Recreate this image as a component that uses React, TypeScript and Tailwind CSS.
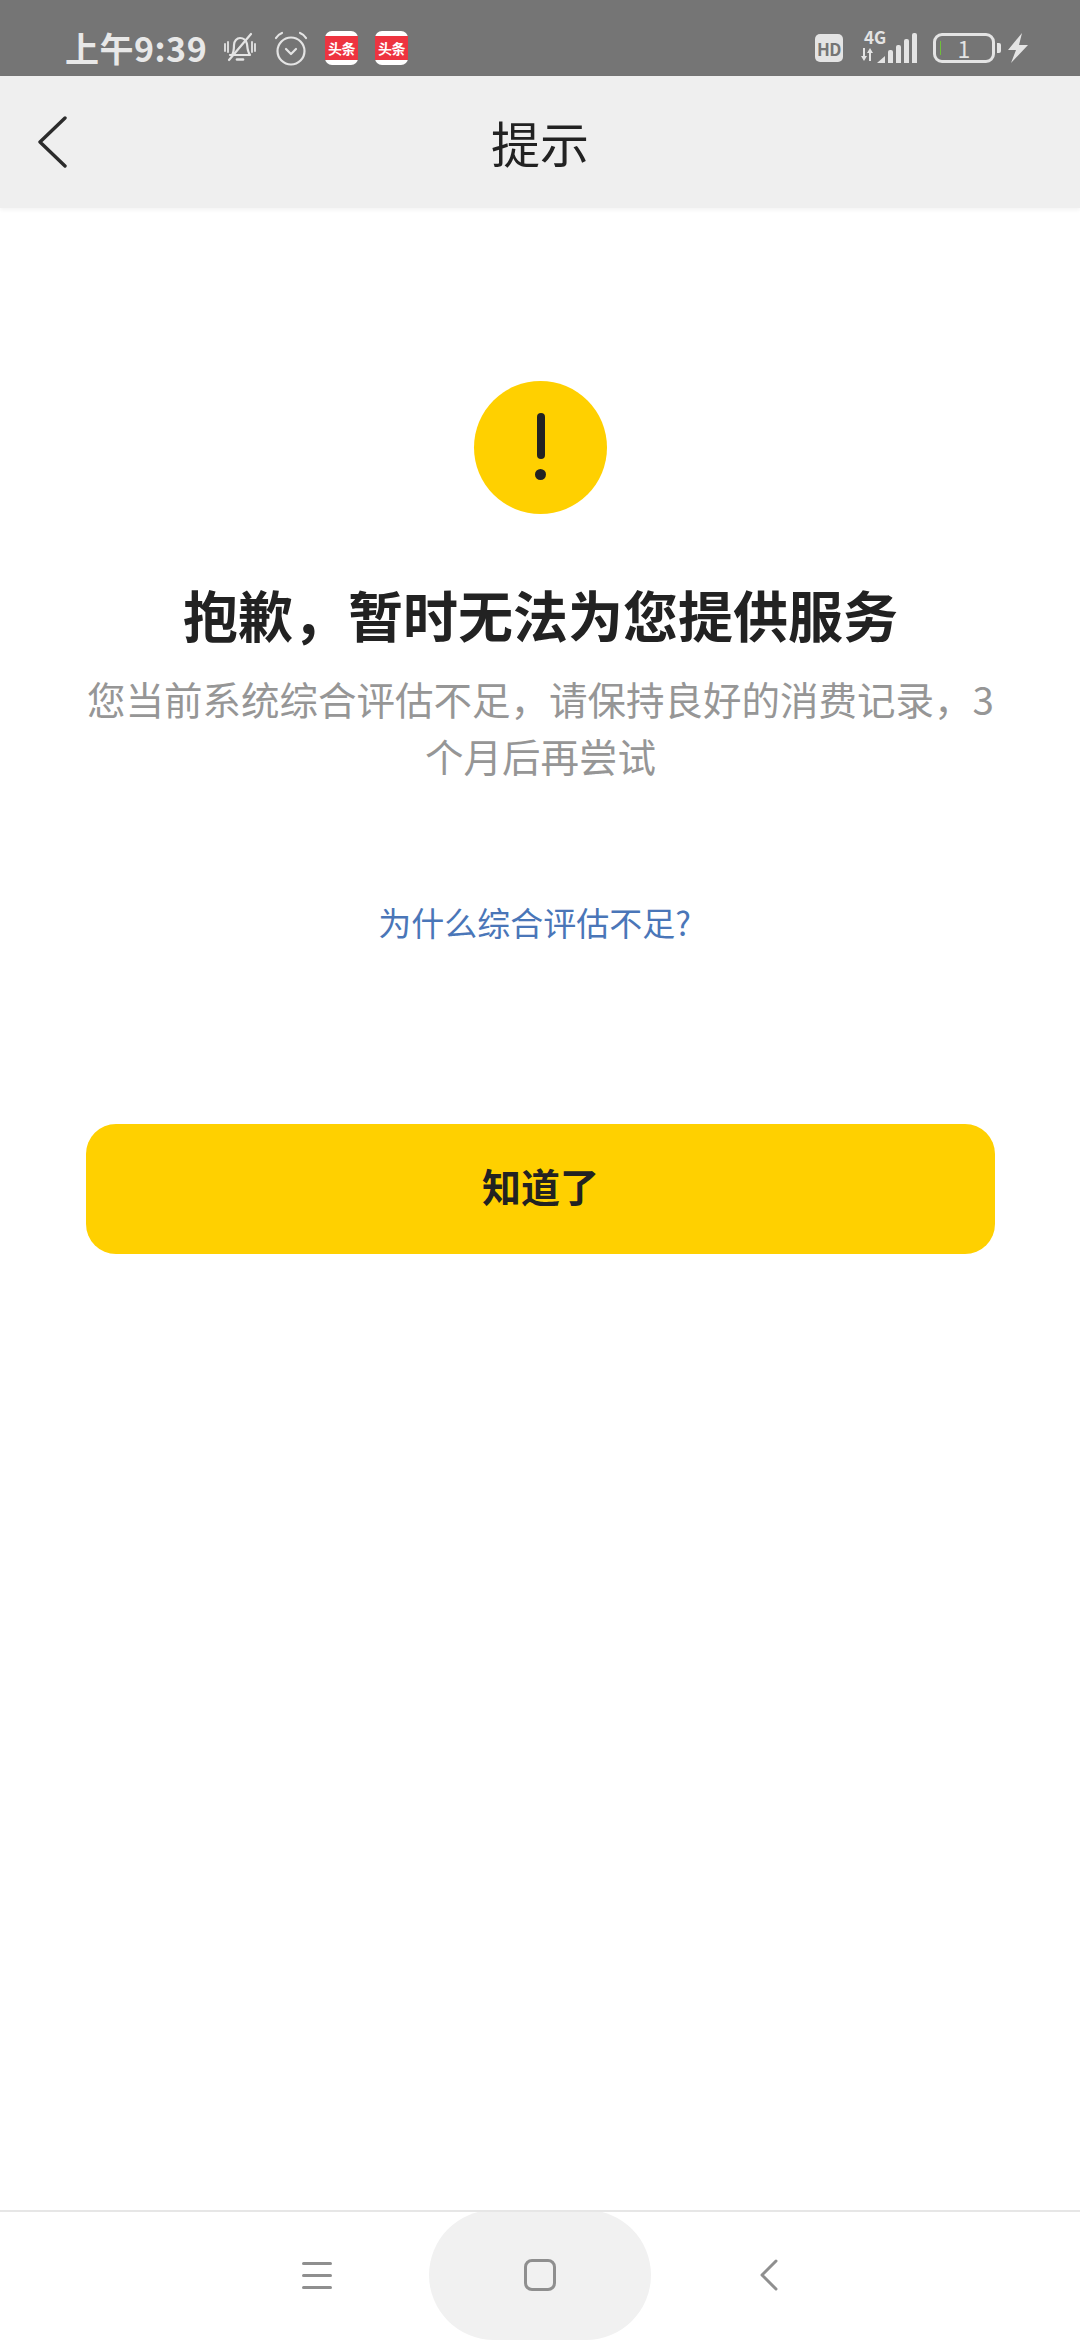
const font = { fontFamily: '"Noto Sans CJK SC", sans-serif' }

function BellOff() {
  return (
    <svg width="36" height="34" viewBox="0 0 36 34" fill="none" stroke="#e4e4e4" strokeWidth="2.2" strokeLinecap="round" strokeLinejoin="round">
      <path d="M10 24c2-3 2-6 2-10 0-4 3-7 6-7s6 2 7 6c.4 4 .6 8 3 11H8" />
      <path d="M15 28.5h6" strokeWidth="2.6" />
      <path d="M29 3 7 29" />
      <path d="M3 13v7M6 11v10M33 13v7M30 11v10" strokeWidth="1.8" />
    </svg>
  )
}

function Alarm() {
  return (
    <svg width="34" height="35" viewBox="0 0 34 35" fill="none" stroke="#e4e4e4" strokeWidth="2.2" strokeLinecap="round" strokeLinejoin="round">
      <circle cx="17" cy="20" r="13.5" />
      <path d="m12 18 5 5 5-5" />
      <path d="M2 7c1.5-2.500 3.500-4 6-5M32 7c-1.500-2.500-3.500-4-6-5" />
    </svg>
  )
}

function Toutiao() {
  return (
    <div className="flex h-[34px] w-[33px] items-center rounded-[7px] bg-white">
      <div className="flex h-[24px] w-full items-center justify-center whitespace-nowrap bg-[#ee3440] text-[14px] font-bold leading-none tracking-[-0.5px] text-white">
        头条
      </div>
    </div>
  )
}

function Signal() {
  return (
    <div className="flex h-[30px] items-end gap-[3px]">
      <svg width="8" height="7" viewBox="0 0 8 7" fill="#e4e4e4"><path d="M0 7 8 0v7z" /></svg>
      <div className="h-[13px] w-[5px] rounded-t-[2px] bg-[#e4e4e4]" />
      <div className="h-[18px] w-[5px] rounded-t-[2px] bg-[#e4e4e4]" />
      <div className="h-[24px] w-[5px] rounded-t-[2px] bg-[#e4e4e4]" />
      <div className="h-[30px] w-[5px] rounded-t-[2px] bg-[#e4e4e4]" />
    </div>
  )
}

function StatusBar() {
  return (
    <div className="flex h-[76px] items-start justify-between bg-[#757575] pl-[65px] pr-[52px] pt-[30px]">
      <div className="flex items-center">
        <span className="w-[141px] whitespace-nowrap text-[34px] font-bold leading-[36px] tracking-[0.5px] text-[#e8e8e8]">上午9:39</span>
        <div className="ml-[16px]"><BellOff /></div>
        <div className="ml-[16px]"><Alarm /></div>
        <div className="ml-[17px]"><Toutiao /></div>
        <div className="ml-[17px]"><Toutiao /></div>
      </div>
      <div className="flex items-start">
        <div className="mt-[4px] flex h-[28px] w-[28px] items-center justify-center rounded-[5px] bg-[#e4e4e4] text-[17px] font-bold leading-none tracking-[-0.5px] text-[#757575]">
          HD
        </div>
        <div className="ml-[15px] flex h-[32px] w-[18px] flex-col items-center">
          <span className="ml-[16px] whitespace-nowrap text-[17px] font-bold leading-[14px] text-[#e4e4e4]">4G</span>
          <svg className="mt-[4px]" width="14" height="13" viewBox="0 0 14 13" fill="#e4e4e4">
            <path d="M3 0h2v8h2l-3 5-3-5h2zM9 13h2V5h2L10 0 7 5h2z" />
          </svg>
        </div>
        <div className="ml-[1px] mt-[3px]"><Signal /></div>
        <div className="ml-[16px] mt-[3px] flex items-center">
          <div className="relative flex h-[30px] w-[62px] items-center justify-center rounded-[9px] border-[3px] border-[#e4e4e4] text-[23px] leading-none text-[#e4e4e4]">
            <div className="absolute left-[4px] top-[5px] h-[14px] w-[1px] bg-[#6fbf3a]" />
            1
          </div>
          <div className="ml-[2px] h-[10px] w-[4px] rounded-r-[2px] bg-[#e4e4e4]" />
          <svg className="ml-[7px]" width="20" height="30" viewBox="0 0 20 30" fill="#e4e4e4">
            <path d="M14 0 0 17h8L3 30l17-18h-9z" />
          </svg>
        </div>
      </div>
    </div>
  )
}

function NavBar() {
  return (
    <div className="relative flex h-[132px] items-center justify-center bg-[#efefef] shadow-[0_2px_4px_rgba(0,0,0,0.05)]">
      <svg className="absolute left-[38px] top-[40px]" width="30" height="52" viewBox="0 0 30 52" fill="none" stroke="#2b2b2b" strokeWidth="3.400" strokeLinecap="round" strokeLinejoin="round">
        <path d="M27 2 2 26l25 24" />
      </svg>
      <span className="-mt-[2px] text-[49px] leading-none text-[#222222]">提示</span>
    </div>
  )
}

function BottomBar() {
  return (
    <div className="relative flex h-[130px] justify-center overflow-hidden border-t-2 border-[#e6e6e6]">
      <div className="flex w-[250px] items-center pb-[2px] pl-[123px]">
        <div className="flex w-[30px] flex-col gap-[9px]">
          <div className="h-[3px] rounded-full bg-[#8f8f8f]" />
          <div className="h-[3px] rounded-full bg-[#8f8f8f]" />
          <div className="h-[3px] rounded-full bg-[#8f8f8f]" />
        </div>
      </div>
      <div className="-mt-[2px] flex h-[130px] w-[222px] items-center justify-center rounded-full bg-[#f1f1f1]">
        <div className="h-[32px] w-[32px] rounded-[8px] border-[3px] border-[#8f8f8f]" />
      </div>
      <div className="flex w-[250px] items-center pb-[2px] pl-[109px]">
        <svg width="18" height="32" viewBox="0 0 18 32" fill="none" stroke="#8f8f8f" strokeWidth="3" strokeLinecap="round" strokeLinejoin="round">
          <path d="M16 2 2 16l14 14" />
        </svg>
      </div>
    </div>
  )
}

export default function App() {
  return (
    <div className="flex h-[2340px] w-[1080px] flex-col overflow-hidden bg-white" style={font}>
      <StatusBar />
      <NavBar />
      <main className="flex flex-1 flex-col items-center pl-[86px] pr-[85px] pt-[173px]">
        <div className="flex h-[133px] w-[133px] flex-col items-center rounded-full bg-[#ffd000] pt-[32px]">
          <div className="h-[46px] w-[8px] rounded-full bg-[#222222]" />
          <div className="mt-[10px] h-[11px] w-[11px] rounded-full bg-[#222222]" />
        </div>
        <h1 className="mt-[66px] text-[55px] font-bold leading-[66px] text-[#222222]">抱歉，暂时无法为您提供服务</h1>
        <p className="mt-[24px] text-center text-[38.5px] leading-[57px] text-[#969696]">
          您当前系统综合评估不足，请保持良好的消费记录，3个月后再尝试
        </p>
        <a className="mr-[12px] mt-[113px] text-[33px] leading-[50px] text-[#4a76b8]">为什么综合评估不足?</a>
        <button className="mt-[177px] h-[130px] w-full rounded-[30px] bg-[#ffd000] pb-[8px] text-[39px] font-bold text-[#222222]">
          知道了
        </button>
      </main>
      <BottomBar />
    </div>
  )
}
